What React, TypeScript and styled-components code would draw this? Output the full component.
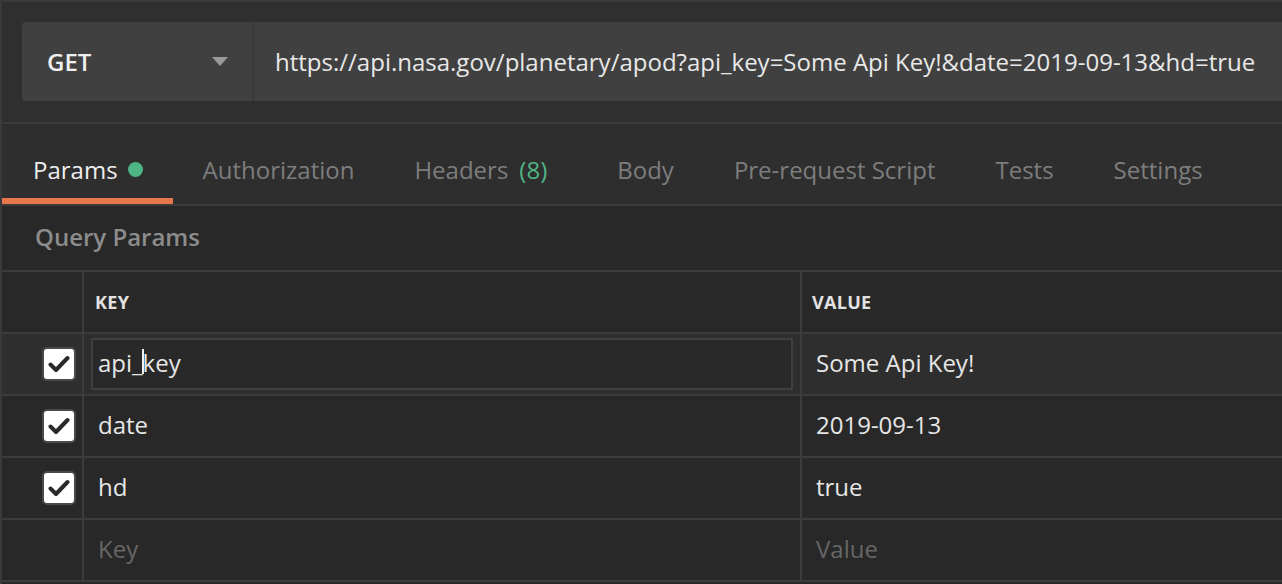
import styled, { createGlobalStyle } from "styled-components";

const GlobalStyle = createGlobalStyle`
  html, body {
    margin: 0;
    padding: 0;
    background: #282828;
  }
  body {
    font-family: "Open Sans", "Noto Sans", sans-serif;
    color: #e6e6e6;
  }
`;

const params = [
  { key: "api_key", value: "Some Api Key!", focused: true },
  { key: "date", value: "2019-09-13" },
  { key: "hd", value: "true" },
];

const tabs = [
  { label: "Params", dot: true },
  { label: "Authorization" },
  { label: "Headers", count: 8 },
  { label: "Body" },
  { label: "Pre-request Script" },
  { label: "Tests" },
  { label: "Settings" },
];

// Outer frame with the thin light edge on top and left
const Frame = styled.div`
  border-top: 2px solid #3a3a3a;
  border-left: 2px solid #3a3a3a;
  height: 582px;
  overflow: hidden;
  background: #282828;
`;

const RequestBar = styled.div`
  height: 122px;
  padding: 20px 0 0 20px;
  box-sizing: border-box;
  background: #2f2f2f;
  border-bottom: 2px solid #3a3a3a;
`;

const RequestBox = styled.div`
  display: flex;
  height: 79px;
  border-radius: 4px 0 0 4px;
  overflow: hidden;
  background: #404040;
`;

const Method = styled.div`
  width: 232px;
  flex-shrink: 0;
  display: flex;
  align-items: center;
  justify-content: space-between;
  padding: 0 24px 0 25px;
  box-sizing: border-box;
  border-right: 2px solid #393939;
  font-size: 24px;
  font-weight: 600;
  color: #f0f0f0;
`;

const Caret = styled.span`
  width: 0;
  height: 0;
  border-left: 8px solid transparent;
  border-right: 8px solid transparent;
  border-top: 9px solid #999999;
`;

const Url = styled.div`
  flex: 1;
  display: flex;
  align-items: center;
  padding-left: 21px;
  font-size: 24px;
  color: #e8e8e8;
  white-space: nowrap;
`;

const TabBar = styled.div`
  display: flex;
  height: 80px;
  background: #2e2e2e;
  border-bottom: 2px solid #3c3c3c;
`;

const Tab = styled.div<{ $active?: boolean; $wide?: boolean }>`
  display: flex;
  align-items: center;
  gap: 10px;
  padding: 16px ${(p) => (p.$wide ? 40 : 30)}px 0 31px;
  margin-right: -1px;
  box-sizing: border-box;
  font-size: 24px;
  color: ${(p) => (p.$active ? "#ededed" : "#7d7d7d")};
  border-bottom: 6px solid ${(p) => (p.$active ? "#e5774b" : "transparent")};
`;

const Dot = styled.span`
  width: 15px;
  height: 15px;
  border-radius: 50%;
  background: #4fb584;
`;

const Count = styled.span`
  margin-left: 11px;
  color: #4fb584;
`;

const SectionTitle = styled.div`
  height: 64px;
  display: flex;
  align-items: center;
  padding: 0 0 4px 33px;
  box-sizing: border-box;
  font-size: 24px;
  font-weight: 600;
  color: #8c8c8c;
  background: #282828;
  border-bottom: 2px solid #3c3c3c;
  height: 66px;
`;

const Row = styled.div<{ $hover?: boolean }>`
  display: grid;
  grid-template-columns: 80px 718px 1fr;
  height: 60px;
  border-bottom: 2px solid #3c3c3c;
  background: ${(p) => (p.$hover ? "#2e2e2e" : "#282828")};
`;

const Cell = styled.div<{ $pad?: number }>`
  display: flex;
  align-items: center;
  padding-left: ${(p) => p.$pad ?? 14}px;
  padding-bottom: 3px;
  border-left: 2px solid #3c3c3c;
  font-size: 24px;
  color: #e6e6e6;
  white-space: nowrap;
  overflow: hidden;
  &:first-child {
    border-left: none;
    padding-left: 0;
    padding-bottom: 0;
    justify-content: flex-end;
    padding-right: 6px;
  }
`;

const HeadLabel = styled.span`
  font-size: 18px;
  font-weight: 700;
  color: #e2e2e2;
  letter-spacing: 0.3px;
  margin-top: 2px;
`;

const Placeholder = styled.span`
  color: #666666;
`;

const KeyInput = styled.div`
  flex: 1;
  height: 52px;
  margin: 3px 7px 0 -7px;
  padding: 0 0 3px 5px;
  display: flex;
  align-items: center;
  border: 2px solid #3f3f3f;
  background: #292929;
  box-sizing: border-box;
`;

const TextCaret = styled.span`
  display: inline-block;
  width: 2px;
  height: 25px;
  margin: 0 -1px;
  background: #f0f0f0;
  vertical-align: middle;
  position: relative;
  top: -1px;
`;

const CheckBox = styled.span`
  width: 34px;
  height: 34px;
  box-sizing: border-box;
  border-radius: 5px;
  border: 2px solid #4a4a4a;
  background: #ffffff;
  display: flex;
  align-items: center;
  justify-content: center;
`;

function Check() {
  return (
    <CheckBox>
      <svg width="22" height="18" viewBox="0 0 22 18">
        <path
          d="M2.5 9.5 L8 15 L19.5 3"
          fill="none"
          stroke="#2a2a2a"
          strokeWidth="4"
          strokeLinecap="round"
          strokeLinejoin="round"
        />
      </svg>
    </CheckBox>
  );
}

export default function App() {
  return (
    <>
      <GlobalStyle />
      <Frame>
        <RequestBar>
          <RequestBox>
            <Method>
              GET
              <Caret />
            </Method>
            <Url>
              https://api.nasa.gov/planetary/apod?api_key=Some Api Key!&amp;date=2019-09-13&amp;hd=true
            </Url>
          </RequestBox>
        </RequestBar>

        <TabBar>
          {tabs.map((t, i) => (
            <Tab key={t.label} $active={i === 0} $wide={t.count !== undefined}>
              <span>
                {t.label}
                {t.count !== undefined && <Count>({t.count})</Count>}
              </span>
              {t.dot && <Dot />}
            </Tab>
          ))}
        </TabBar>

        <SectionTitle>Query Params</SectionTitle>

        <Row>
          <Cell />
          <Cell $pad={11}>
            <HeadLabel>KEY</HeadLabel>
          </Cell>
          <Cell $pad={10}>
            <HeadLabel>VALUE</HeadLabel>
          </Cell>
        </Row>

        {params.map((p) => (
          <Row key={p.key} $hover={p.focused}>
            <Cell>
              <Check />
            </Cell>
            <Cell>
              {p.focused ? (
                <KeyInput>
                  api_<TextCaret />key
                </KeyInput>
              ) : (
                p.key
              )}
            </Cell>
            <Cell>{p.value}</Cell>
          </Row>
        ))}

        <Row>
          <Cell />
          <Cell>
            <Placeholder>Key</Placeholder>
          </Cell>
          <Cell>
            <Placeholder>Value</Placeholder>
          </Cell>
        </Row>
      </Frame>
    </>
  );
}
